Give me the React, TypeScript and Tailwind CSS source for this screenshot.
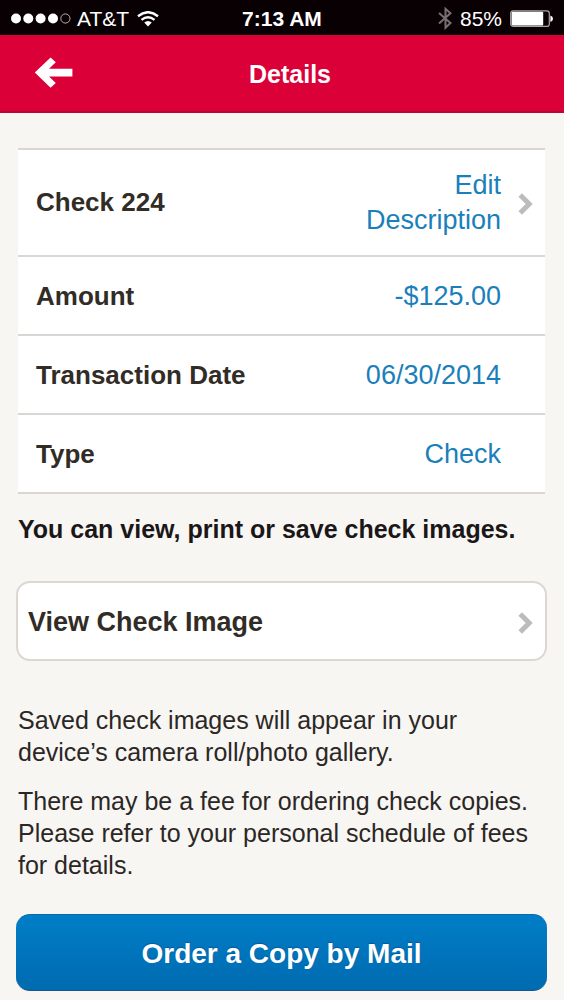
import React from "react";

function Chevron() {
  return (
    <svg className="h-6 w-4 shrink-0" viewBox="0 0 16 24" fill="none" stroke="#bdbcba" strokeWidth="5" aria-hidden="true">
      <path d="M3.2 4 L12.2 13 L3.2 22" />
    </svg>
  );
}

function StatusBar() {
  return (
    <div className="grid h-[35px] grid-cols-3 items-center bg-[#080002] pl-[11px] pr-[11px] pt-0.5 text-[21px] leading-6 text-white">
      <div className="flex items-center gap-2">
        <svg className="h-3 w-[60px] shrink-0" viewBox="0 0 60 12" fill="#fff" aria-hidden="true">
          <circle cx="5" cy="5.5" r="5" />
          <circle cx="17.3" cy="5.5" r="5" />
          <circle cx="29.6" cy="5.5" r="5" />
          <circle cx="42" cy="5.5" r="5" />
          <circle cx="54.4" cy="5.5" r="4.6" fill="none" stroke="#c9c4c5" strokeWidth="0.9" />
        </svg>
        <span className="-ml-0.5">AT&amp;T</span>
        <svg className="h-4 w-[22px] shrink-0" viewBox="0 0 22 16" fill="none" stroke="#fff" strokeWidth="2.4" aria-hidden="true">
          <path d="M1 5.2 Q11 -2.8 21 5.2" />
          <path d="M4.5 8.9 Q11 3.8 17.5 8.9" />
          <path d="M7.2 11.4 Q11 8.4 14.8 11.4 L11 15.4 Z" fill="#fff" stroke="none" />
        </svg>
      </div>
      <span className="text-center font-bold">7:13 AM</span>
      <div className="flex items-center justify-end gap-2">
        <svg className="h-[23px] w-[14px] shrink-0" viewBox="0 0 14 23" fill="none" stroke="#777072" strokeWidth="2" aria-hidden="true">
          <path d="M1 6 L12.5 16 L7.5 20.8 V1.8 L12.5 6.2 L1 16.5" />
        </svg>
        <span>85%</span>
        <svg className="h-[18px] w-[43px] shrink-0" viewBox="0 0 43 18" aria-hidden="true">
          <rect x="0.7" y="0.8" width="38.6" height="15.6" rx="2.5" fill="none" stroke="#aaa6a7" strokeWidth="1.2" />
          <rect x="1.6" y="1.8" width="31.6" height="13.6" rx="1" fill="#fff" />
          <path d="M40.4 5.5 Q43 6.3 43 8.7 Q43 11.1 40.4 11.9 Z" fill="#fff" />
        </svg>
      </div>
    </div>
  );
}

function Row({ label, value }: { label: string; value: string }) {
  return (
    <div className="flex h-[79px] items-center justify-between border-b-2 border-[#dad6d3] pl-[18px] pr-11 pt-0.5">
      <dt className="font-bold text-[#322c26]">{label}</dt>
      <dd className="text-[27px] text-[#1a7fba]">{value}</dd>
    </div>
  );
}

export default function App() {
  return (
    <div className="min-h-screen bg-[#f8f6f3] pb-[9px] font-['Liberation_Sans',Arial,sans-serif]">
      <StatusBar />
      <header className="grid h-[78px] grid-cols-[1fr_auto_1fr] items-center border-b-2 border-[#b50a35] bg-[#dc0039] pl-[34px] pr-[18px] pt-1">
        <button type="button" aria-label="Back" className="w-10 cursor-pointer pb-1">
          <svg className="h-8 w-10" viewBox="0 0 40 32" fill="#fff" aria-hidden="true">
            <path d="M0.8 15.5 L16.6 0.5 L21.8 5.2 L15 11.8 H38.4 V19.4 H15 L21.8 26 L16.6 30.7 Z" />
          </svg>
        </button>
        <h1 className="text-[25px] font-bold text-white">Details</h1>
      </header>

      <main className="pl-4 pr-[17px] pt-[35px]">
        <dl className="mx-0.5 border-t-2 border-[#dad6d3] bg-white text-[26px] leading-[35px]">
          <div className="flex h-[107px] items-center border-b-2 border-[#dad6d3] pl-[18px] pr-3">
            <dt className="flex-1 font-bold text-[#322c26]">Check 224</dt>
            <dd>
              <a href="#edit" className="flex items-center gap-4 text-right text-[27px] text-[#1a7fba]">
                <span className="w-36">Edit Description</span>
                <Chevron />
              </a>
            </dd>
          </div>
          <Row label="Amount" value="-$125.00" />
          <Row label="Transaction Date" value="06/30/2014" />
          <Row label="Type" value="Check" />
        </dl>

        <h2 className="mx-0.5 mt-[19px] text-[25px] font-bold leading-8 text-[#1b1718]">
          You can view, print or save check images.
        </h2>

        <button
          type="button"
          className="mt-9 flex h-20 w-full cursor-pointer items-center justify-between rounded-[14px] border-2 border-[#dcd7d1] bg-white pl-2.5 pr-3 pt-0.5 text-[27px] font-bold text-[#322c26]"
        >
          View Check Image
          <Chevron />
        </button>

        <div className="mx-0.5 mt-[43px] flex flex-col gap-[17px] text-[25px] leading-8 text-[#2b2725]">
          <p>Saved check images will appear in your device’s camera roll/photo gallery.</p>
          <p>There may be a fee for ordering check copies. Please refer to your personal schedule of fees for details.</p>
        </div>

        <button
          type="button"
          className="mt-[33px] h-[77px] w-full cursor-pointer rounded-[14px] border-y border-t-[#0a68a6] border-b-[#11598c] bg-linear-to-b from-[#007ec8] to-[#006bb0] pt-0.5 text-[28px] font-bold text-white [text-shadow:0_-1px_1px_#06599a]"
        >
          Order a Copy by Mail
        </button>
      </main>
    </div>
  );
}
